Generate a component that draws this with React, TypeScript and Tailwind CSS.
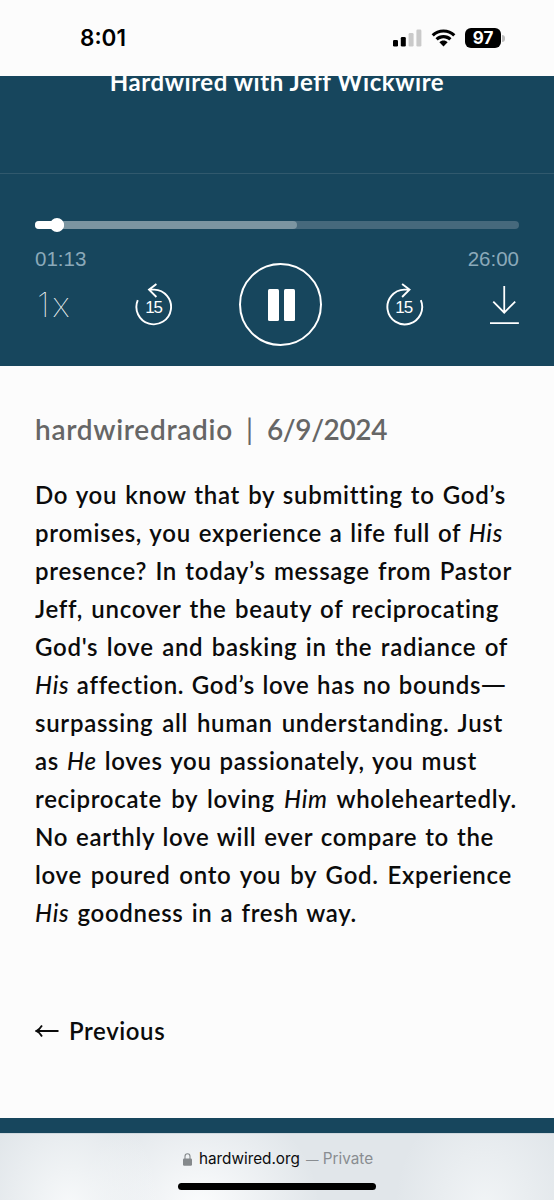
import type { ReactNode } from "react";

export default function App() {
  return (
    <div className="flex h-[1200px] w-[554px] flex-col overflow-hidden bg-[#fcfcfc] font-['Lato',sans-serif]">
      <StatusBar />
      <Player />

      <main className="h-[752px] pl-[35px] pt-[44px]">
        <div className="flex h-[38px] whitespace-nowrap text-[28px] font-semibold leading-[38px] text-[#666666]">
          <span className="w-[211px] tracking-[0.7px]">hardwiredradio</span>
          <span className="w-[21px] font-normal">|</span>
          <span className="tracking-[-0.4px]">6/9/2024</span>
        </div>

        <div className="mt-[28px] text-[24px] font-semibold leading-[38px] text-[#0b0b0b]">
          <Line className="w-[471px]">Do you know that by submitting to God’s</Line>
          <Line className="w-[468px]">
            promises, you experience a life full of <Em>His</Em>
          </Line>
          <Line className="w-[477px]">presence? In today’s message from Pastor</Line>
          <Line className="w-[464px]">Jeff, uncover the beauty of reciprocating</Line>
          <Line className="w-[473px]">God's love and basking in the radiance of</Line>
          <Line className="w-[473px]">
            <Em>His</Em> affection. God’s love has no bounds
            <span className="ml-[7px] inline-block origin-right scale-x-[1.4]">—</span>
          </Line>
          <Line className="w-[468px]">surpassing all human understanding. Just</Line>
          <Line className="w-[442px]">
            as <Em>He</Em> loves you passionately, you must
          </Line>
          <Line className="w-[482px]">
            reciprocate by loving <Em>Him</Em> wholeheartedly.
          </Line>
          <Line className="w-[459px]">No earthly love will ever compare to the</Line>
          <Line className="w-[477px]">love poured onto you by God. Experience</Line>
          <Line className="w-[322px]">
            <Em>His</Em> goodness in a fresh way.
          </Line>
        </div>

        <a className="mt-[80px] flex h-[38px] items-center gap-[10px] text-[24px] font-semibold leading-[38px] text-[#0b0b0b]">
          <svg width="24" height="14" viewBox="0 0 24 14" fill="none" stroke="currentColor" strokeWidth="1.8">
            <path d="M23.5 7H1.5M7 1.5C5.5 4 4 6 1.2 7C4 8 5.5 10 7 12.5" />
          </svg>
          <span className="tracking-[0.6px]">Previous</span>
        </a>
      </main>

      <div className="h-[15px] bg-[#17465d]" />
      <BrowserBar />
    </div>
  );
}

function Line({ className, children }: { className: string; children: ReactNode }) {
  return (
    <p className={`h-[38px] whitespace-nowrap tracking-[0.7px] [text-align-last:justify] ${className}`}>
      {children}
    </p>
  );
}

function Em({ children }: { children: ReactNode }) {
  return <em className="font-medium">{children}</em>;
}

function StatusBar() {
  return (
    <header className="flex h-[76px] shrink-0 items-center justify-between pl-[80px] pr-[49px] text-black">
      <span className="font-['Inter',sans-serif] text-[22.5px] font-semibold leading-[28px]">8:01</span>
      <div className="flex items-center gap-[9px]">
        <svg width="29" height="18" viewBox="0 0 29 18">
          <rect x="0" y="11" width="5" height="6.5" rx="1.3" />
          <rect x="7.8" y="8" width="5" height="9.5" rx="1.3" />
          <rect x="15.6" y="4" width="5" height="13.5" rx="1.3" fill="#cacaca" />
          <rect x="23.4" y="0.5" width="5" height="17" rx="1.3" fill="#cacaca" />
        </svg>
        <svg width="25" height="18" viewBox="0 0 25 18">
          <path d="M12.5 0.5C17.1 0.5 21.3 2.3 24.4 5.2L22.2 7.5C19.7 5.1 16.2 3.6 12.5 3.6S5.3 5.1 2.8 7.5L0.6 5.2C3.7 2.3 7.9 0.5 12.5 0.5Z" />
          <path d="M12.5 6.1C15.6 6.1 18.4 7.3 20.5 9.2L18.2 11.6C16.7 10.2 14.7 9.3 12.5 9.3S8.3 10.2 6.8 11.6L4.5 9.2C6.6 7.3 9.4 6.1 12.5 6.1Z" />
          <path d="M12.5 11.6C14.1 11.6 15.5 12.2 16.6 13.2L12.5 17.5L8.4 13.2C9.5 12.2 10.9 11.6 12.5 11.6Z" />
        </svg>
        <div className="flex items-center gap-[1px]">
          <span className="flex h-[20px] w-[36px] items-center justify-center rounded-[6px] bg-black font-['Inter',sans-serif] text-[17px] font-bold leading-[20px] text-white">
            97
          </span>
          <span className="h-[7px] w-[3px] rounded-r-full bg-[#bdbdbd]" />
        </div>
      </div>
    </header>
  );
}

function Player() {
  return (
    <section className="h-[290px] shrink-0 bg-[#17465d] text-white">
      {/* Title is scrolled partly under the status bar */}
      <div className="h-[98px] overflow-hidden border-b border-[#31596d]">
        <h1 className="-mt-[13px] flex h-[38px] justify-center whitespace-nowrap text-[24px] font-bold leading-[38px] tracking-[0.56px]">
          Hardwired with Jeff Wickwire
        </h1>
      </div>

      <div className="px-[35px] pt-[47px]">
        <div className="h-[8px] rounded-full bg-[#46697c]">
          <div className="h-full w-[262px] rounded-full bg-[#7b95a1]">
            <div className="flex h-full w-[29px] items-center justify-end rounded-full bg-white">
              <span className="size-[14px] shrink-0 rounded-full bg-white" />
            </div>
          </div>
        </div>

        <div className="mt-[18px] flex h-[24px] justify-between font-['Liberation_Sans',sans-serif] text-[20.5px] leading-[24px] text-[#8ba9b9]">
          <span>01:13</span>
          <span>26:00</span>
        </div>

        <div className="-mt-[8px] flex h-[83px] items-center">
          <span className="w-[99px] pl-[2px] font-['Inter',sans-serif] text-[34px] font-thin leading-[40px] tracking-[3px]">
            1x
          </span>
          <SkipIcon />
          <div className="ml-[66px] flex size-[83px] items-center justify-center gap-[5px] rounded-full border-2 border-white pl-[2px]">
            <span className="h-[32px] w-[11px] rounded-[1.5px] bg-white" />
            <span className="h-[32px] w-[11px] rounded-[1.5px] bg-white" />
          </div>
          <div className="ml-[62px]">
            <SkipIcon forward />
          </div>
          <svg className="ml-[65px]" width="30" height="42" viewBox="0 0 30 42" fill="none" stroke="currentColor" strokeWidth="1.8">
            <path d="M15.3 2V28.5M4.3 17.5L15.3 28.7L26.3 17.5M1 39.3H30" />
          </svg>
        </div>
      </div>
    </section>
  );
}

function SkipIcon({ forward = false }: { forward?: boolean }) {
  return (
    <svg width="40" height="46" viewBox="0 0 40 46" fill="none" stroke="currentColor" strokeWidth="1.9">
      <path
        transform={forward ? "translate(40.6 0) scale(-1 1)" : undefined}
        d="M3.8 18.2A17.4 17.4 0 1 0 20.3 7.6H15.4M22.5 2L15.1 7.6L22.5 15"
      />
      <text
        x="19.7"
        y="30.9"
        textAnchor="middle"
        fill="currentColor"
        stroke="none"
        className="font-['Liberation_Sans',sans-serif] text-[17px] tracking-[-1px]"
      >
        15
      </text>
    </svg>
  );
}

function BrowserBar() {
  return (
    <footer className="flex h-[67px] flex-col items-center border-t border-[#cfd8de] bg-[#e1e6ea] bg-[radial-gradient(ellipse_90px_110px_at_70px_110%,#f7f9fa_0%,transparent_100%),radial-gradient(ellipse_120px_110px_at_200px_110%,#fbfcfd_0%,transparent_100%),radial-gradient(ellipse_90px_110px_at_485px_110%,#f1f4f6_0%,transparent_100%)] pt-[13px]">
      <div className="ml-[2px] flex h-[24px] items-center whitespace-nowrap font-['Inter',sans-serif] text-[15.3px] leading-[24px]">
        <svg width="9" height="13" viewBox="0 0 9 13" fill="#85898c">
          <rect x="0" y="5.4" width="9" height="7.4" rx="1.2" />
          <path d="M2 6V3.5A2.5 2.7 0 0 1 7 3.5V6" fill="none" stroke="#85898c" strokeWidth="1.1" />
        </svg>
        <span className="ml-[7px] text-[#0b0c0d]">hardwired.org</span>
        <span className="ml-[6px] text-[#898d91]">
          <span className="text-[12.5px]">—</span> Private
        </span>
      </div>
      <div className="mt-[12px] h-[7px] w-[198px] rounded-full bg-black" />
    </footer>
  );
}
